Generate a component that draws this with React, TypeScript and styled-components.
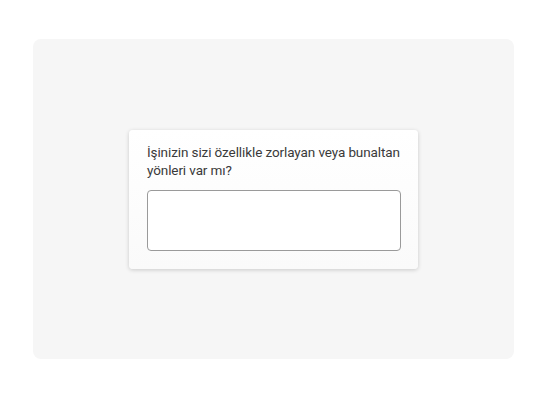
import React from 'react';
import styled, { createGlobalStyle } from 'styled-components';

const GlobalStyle = createGlobalStyle`
  html, body {
    margin: 0;
    padding: 0;
    background: #ffffff;
  }
  body {
    font-family: Roboto, "Noto Sans", sans-serif;
  }
`;

const Page = styled.div`
  padding: 39px 33px 41px;
`;

const Panel = styled.div`
  height: 320px;
  background: #f6f6f6;
  border-radius: 8px;
  display: flex;
  align-items: center;
  justify-content: center;
`;

const Card = styled.div`
  width: 289px;
  box-sizing: border-box;
  padding: 13px 17px 18px 18px;
  background: linear-gradient(#ffffff, #fafafa);
  border-radius: 4px;
  box-shadow: 0 1px 4px rgba(0, 0, 0, 0.18);
  display: flex;
  flex-direction: column;
  gap: 11px;
`;

const Question = styled.label`
  font-size: 13.5px;
  letter-spacing: -0.1px;
  line-height: 18px;
  color: #3a3a3a;
`;

const Answer = styled.textarea`
  width: 254px;
  height: 61px;
  box-sizing: border-box;
  border: 1px solid #9a9a9a;
  border-radius: 4px;
  background: #ffffff;
  resize: none;
  outline: none;
  padding: 8px;
  font-family: inherit;
  font-size: 14px;
`;

export default function App() {
  return (
    <>
      <GlobalStyle />
      <Page>
        <Panel>
          <Card>
            <Question htmlFor="answer">
              İşinizin sizi özellikle zorlayan veya bunaltan yönleri var mı?
            </Question>
            <Answer id="answer" />
          </Card>
        </Panel>
      </Page>
    </>
  );
}
